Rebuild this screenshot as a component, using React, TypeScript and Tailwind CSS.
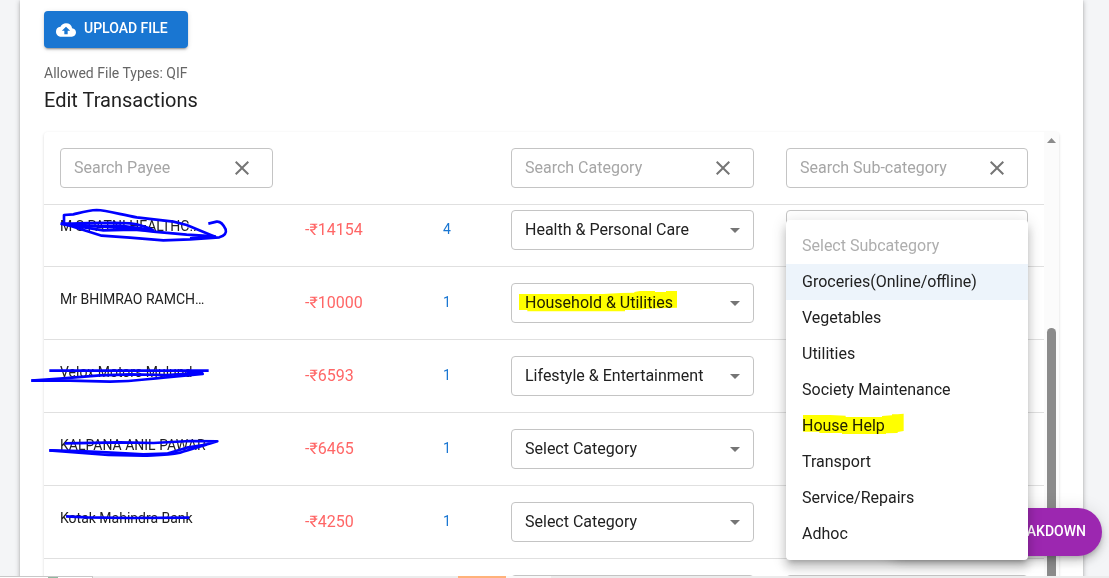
import { MdArrowDropDown, MdClose, MdCloudUpload } from "react-icons/md";

type Row = {
  payee: string;
  amount: string;
  count: string;
  category: string;
  scribble?: { viewBox: string; paths: string[] };
  marked?: boolean;
};

const rows: Row[] = [
  {
    payee: "M S PATNI HEALTHC...",
    amount: "-₹14154",
    count: "4",
    category: "Health & Personal Care",
    scribble: {
      viewBox: "72 30 780 390",
      paths: [
        "M122 86 L145 91 L200 108 L245 122 L330 128 L430 136 L510 133 L598 127 Q622 120 617 103 Q605 78 590 80 L565 86",
        "M122 86 C200 86 270 80 330 85 C370 90 385 98 400 106 L340 104 L250 106 L145 90",
        "M132 86 V60 L160 58 C185 52 205 46 230 45 C260 46 300 58 350 67 L460 80 L500 90 L585 125",
        "M150 88 L240 94 L320 100 L400 110 L500 119 L585 124 L510 130",
        "M180 94 L300 92 L390 104",
      ],
    },
  },
  { payee: "Mr BHIMRAO RAMCH…", amount: "-₹10000", count: "1", category: "Household & Utilities", marked: true },
  {
    payee: "Velox Motors Mulund",
    amount: "-₹6593",
    count: "1",
    category: "Lifestyle & Entertainment",
    scribble: {
      viewBox: "72 0 780 390",
      paths: [
        "M88 92 H566",
        "M34 122 L120 116 L240 106 L330 103 L440 105 L550 98",
        "M34 122 L150 122 L270 125 C350 124 370 118 430 113 L548 102 L500 96",
      ],
    },
  },
  {
    payee: "KALPANA ANIL PAWAR",
    amount: "-₹6465",
    count: "1",
    category: "Select Category",
    scribble: {
      viewBox: "72 219 780 390",
      paths: [
        "M134 310 L300 307 L400 309 L510 303 L592 304 C550 317 510 328 480 338 C440 346 410 345 370 347 L265 345 L88 331",
        "M88 331 L180 333 L260 337 L370 343 L440 341 L500 323 L560 314",
      ],
    },
  },
  {
    payee: "Kotak Mahindra Bank",
    amount: "-₹4250",
    count: "1",
    category: "Select Category",
    scribble: { viewBox: "72 438 780 390", paths: ["M138 529 L200 532 L330 534 L508 533"] },
  },
  { payee: "", amount: "", count: "", category: "" },
];

const subcategories = [
  "Select Subcategory",
  "Groceries(Online/offline)",
  "Vegetables",
  "Utilities",
  "Society Maintenance",
  "House Help",
  "Transport",
  "Service/Repairs",
  "Adhoc",
];

function SearchField({ label }: { label: string }) {
  return (
    <div className="flex h-10 items-center rounded border border-[#c4c4c4] pr-[18px] pl-[13px]">
      <input
        aria-label={label}
        placeholder={label}
        className="min-w-0 flex-1 bg-transparent text-base font-normal outline-none placeholder:text-[#a6a6a6]"
      />
      <button aria-label="Clear" className="text-[#757575]">
        <MdClose size={24} />
      </button>
    </div>
  );
}

function Dropdown({ value, label }: { value: string; label: string }) {
  return (
    <div className="relative">
      <select
        aria-label={label}
        className="block h-10 w-full appearance-none rounded border border-[#c4c4c4] bg-transparent pr-8 pl-[13px] text-base text-[#212121] outline-none"
      >
        <option>{value}</option>
      </select>
      <MdArrowDropDown size={24} className="pointer-events-none absolute top-2 right-[7px] text-[#757575]" />
    </div>
  );
}

function SubcategoryMenu() {
  return (
    <ul
      role="listbox"
      aria-label="Subcategory"
      className="absolute top-2.5 left-0 z-30 w-full rounded bg-white py-2 shadow-[0_5px_5px_-3px_rgba(0,0,0,0.2),0_8px_10px_1px_rgba(0,0,0,0.14),0_3px_14px_2px_rgba(0,0,0,0.12)]"
    >
      {subcategories.map((name, i) => (
        <li
          key={name}
          role="option"
          aria-selected={i === 1}
          className={
            i === 0
              ? "relative h-9 px-4 text-base leading-9 text-[#aeaeae]"
              : i === 1
                ? "relative h-9 bg-[#edf4fb] px-4 text-base leading-9 text-[#212121]"
                : "relative h-9 px-4 text-base leading-9 text-[#212121]"
          }
        >
          {name}
          {name === "House Help" && (
            <svg className="absolute top-0 left-0 mix-blend-multiply" width="120" height="36" viewBox="48 24 360 108">
              <path
                fill="#ffff00"
                d="M99 45H180L227 47V51H336V48L366 46V43H383L401 41V93L383 96V99L348 100V102H216V99H148V95H99Z"
              />
            </svg>
          )}
        </li>
      ))}
    </ul>
  );
}

export default function App() {
  return (
    <div className="h-screen overflow-hidden bg-[#f4f5f7] pr-[26px] pl-5 font-['Roboto',sans-serif] text-[#212121]">
      <main className="min-h-screen bg-white px-6 pt-[11px] shadow-[0_2px_1px_-1px_rgba(0,0,0,0.2),0_1px_1px_0_rgba(0,0,0,0.14),0_1px_5px_0_rgba(0,0,0,0.3)]">
        <button className="flex h-[37px] w-36 items-center gap-2 rounded bg-[#1976d2] pl-3 text-sm font-medium text-white shadow-[0_3px_1px_-2px_rgba(0,0,0,0.2),0_2px_2px_0_rgba(0,0,0,0.14),0_1px_5px_0_rgba(0,0,0,0.12)]">
          <MdCloudUpload size={20} />
          <span className="pb-1">UPLOAD FILE</span>
        </button>
        <p className="mt-[15px] text-sm text-[#666666]">Allowed File Types: QIF</p>
        <h1 className="mt-px text-xl leading-8 font-normal">Edit Transactions</h1>

        <section className="mt-4 flex rounded shadow-[0_2px_1px_-1px_rgba(0,0,0,0.12),0_1px_3px_0_rgba(0,0,0,0.16)]">
          <div className="min-w-0 flex-1">
            <table className="w-full table-fixed border-separate border-spacing-0">
              <thead>
                <tr>
                  <th className="w-[24.5%] border-b border-[#e0e0e0] p-4">
                    <SearchField label="Search Payee" />
                  </th>
                  <th className="w-[13.8%] border-b border-[#e0e0e0]" />
                  <th className="w-[6.8%] border-b border-[#e0e0e0]" />
                  <th className="w-[27.5%] border-b border-[#e0e0e0] p-4">
                    <SearchField label="Search Category" />
                  </th>
                  <th className="w-[27.4%] border-b border-[#e0e0e0] p-4">
                    <SearchField label="Search Sub-category" />
                  </th>
                </tr>
              </thead>
              <tbody>
                {rows.map((row, i) => {
                  const cell =
                    i === 0
                      ? "relative border-b border-[#e0e0e0] px-4 pt-[5px] pb-4"
                      : "relative border-b border-[#e0e0e0] px-4 py-4";
                  return (
                    <tr key={i}>
                      <td className={cell}>
                        <div className="mb-2 text-sm whitespace-nowrap">{row.payee}</div>
                        {row.scribble && (
                          <svg
                            className="pointer-events-none absolute top-0 left-0 overflow-visible"
                            width="260"
                            height="130"
                            viewBox={row.scribble.viewBox}
                            fill="none"
                            stroke="#0000ff"
                            strokeWidth="8"
                            strokeLinejoin="round"
                          >
                            {row.scribble.paths.map((d) => (
                              <path key={d} d={d} />
                            ))}
                          </svg>
                        )}
                      </td>
                      <td className={cell}>
                        <div className="text-base whitespace-nowrap text-[#ff6666]">{row.amount}</div>
                      </td>
                      <td className={cell}>
                        <a href="#transactions" className="mb-0.5 block text-sm text-[#1976d2]">
                          {row.count}
                        </a>
                      </td>
                      <td className={cell}>
                        <Dropdown value={row.category} label="Category" />
                        {row.marked && (
                          <svg
                            className="pointer-events-none absolute top-4 left-4 mix-blend-multiply"
                            width="243"
                            height="40"
                            viewBox="33 459 729 120"
                          >
                            <path
                              fill="#ffff00"
                              d="M57 492H310L363 489L403 488V486L420 483H465V486H498V483H531V533L480 535L432 537L414 540H375V544H82V540H57Z"
                            />
                          </svg>
                        )}
                      </td>
                      <td className={cell}>
                        <div className="relative">
                          <Dropdown value="" label="Sub-category" />
                          {i === 0 && <SubcategoryMenu />}
                        </div>
                      </td>
                    </tr>
                  );
                })}
              </tbody>
            </table>
          </div>
          <div className="flex w-[15px] flex-col items-center bg-[#fbfbfb] pt-1.5" aria-hidden="true">
            <svg width="9" height="5" viewBox="0 0 9 5" fill="#8b8b8b">
              <path d="M4.5 0L9 5H0Z" />
            </svg>
            <div className="mt-[185px] w-[9px] flex-1 rounded-t-full bg-[#8b8b8b]" />
          </div>
        </section>
      </main>

      <button className="fixed right-[7px] bottom-[22px] z-20 flex h-12 w-[222px] items-center justify-end rounded-full bg-[#9c27b0] pr-4 pb-0.5 text-sm font-medium text-white shadow-[0_3px_5px_-1px_rgba(0,0,0,0.2),0_6px_10px_0_rgba(0,0,0,0.14),0_1px_18px_0_rgba(0,0,0,0.12)]">
        BREAKDOWN
      </button>

      <footer className="fixed inset-x-0 bottom-0 z-40 flex h-0.5 bg-[#ececec]">
        <div className="flex w-[93px] border-t border-r border-[#c8c8c8] bg-white pl-12">
          <span className="w-2.5 bg-[#8fb89f]" />
        </div>
        <span className="ml-[365px] w-12 bg-[#ffb27a]" />
        <span className="w-[45px] bg-[#f8f8f8]" />
      </footer>
    </div>
  );
}
